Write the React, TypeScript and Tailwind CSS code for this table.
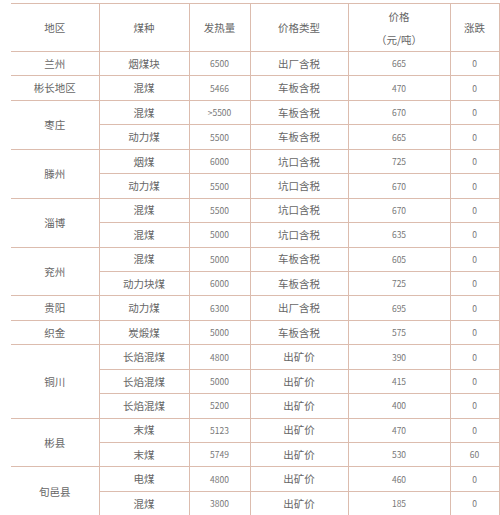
import React from "react";

type Row = { region?: string; span?: number; kind: string; heat: string; ptype: string; price: string; chg: string };

const rows: Row[] = [
  { region: "兰州", span: 1, kind: "烟煤块", heat: "6500", ptype: "出厂含税", price: "665", chg: "0" },
  { region: "彬长地区", span: 1, kind: "混煤", heat: "5466", ptype: "车板含税", price: "470", chg: "0" },
  { region: "枣庄", span: 2, kind: "混煤", heat: ">5500", ptype: "车板含税", price: "670", chg: "0" },
  { kind: "动力煤", heat: "5500", ptype: "车板含税", price: "665", chg: "0" },
  { region: "滕州", span: 2, kind: "烟煤", heat: "6000", ptype: "坑口含税", price: "725", chg: "0" },
  { kind: "动力煤", heat: "5500", ptype: "坑口含税", price: "670", chg: "0" },
  { region: "淄博", span: 2, kind: "混煤", heat: "5500", ptype: "坑口含税", price: "670", chg: "0" },
  { kind: "混煤", heat: "5000", ptype: "坑口含税", price: "635", chg: "0" },
  { region: "兖州", span: 2, kind: "混煤", heat: "5000", ptype: "车板含税", price: "605", chg: "0" },
  { kind: "动力块煤", heat: "6000", ptype: "车板含税", price: "725", chg: "0" },
  { region: "贵阳", span: 1, kind: "动力煤", heat: "6300", ptype: "出厂含税", price: "695", chg: "0" },
  { region: "织金", span: 1, kind: "炭煅煤", heat: "5000", ptype: "车板含税", price: "575", chg: "0" },
  { region: "铜川", span: 3, kind: "长焰混煤", heat: "4800", ptype: "出矿价", price: "390", chg: "0" },
  { kind: "长焰混煤", heat: "5000", ptype: "出矿价", price: "415", chg: "0" },
  { kind: "长焰混煤", heat: "5200", ptype: "出矿价", price: "400", chg: "0" },
  { region: "彬县", span: 2, kind: "末煤", heat: "5123", ptype: "出矿价", price: "470", chg: "0" },
  { kind: "末煤", heat: "5749", ptype: "出矿价", price: "530", chg: "60" },
  { region: "旬邑县", span: 2, kind: "电煤", heat: "4800", ptype: "出矿价", price: "460", chg: "0" },
  { kind: "混煤", heat: "3800", ptype: "出矿价", price: "185", chg: "0" },
];

const cjk = "border border-[#dcbcae] text-center align-middle text-[10.5px] text-[#666]";
const num = "border border-[#dcbcae] text-center align-middle text-[8.5px] text-[#777]";

export default function App() {
  return (
    <div className="w-[500px] h-[515px] overflow-hidden bg-white pt-[3px] pl-[11px]" style={{ fontFamily: '"Noto Sans CJK SC", "Noto Sans", sans-serif' }}>
      <table className="table-fixed border-collapse w-[488px]">
        <colgroup>
          <col className="w-[88px]" />
          <col className="w-[90px]" />
          <col className="w-[61px]" />
          <col className="w-[98px]" />
          <col className="w-[102px]" />
          <col className="w-[49px]" />
        </colgroup>
        <thead>
          <tr className="h-[48px]">
            <td className={cjk + " border-l-0"}>地区</td>
            <td className={cjk}>煤种</td>
            <td className={cjk}>发热量</td>
            <td className={cjk}>价格类型</td>
            <td className={cjk + " leading-[23px]"}>
              <div>价格</div>
              <div>（元/吨）</div>
            </td>
            <td className={cjk}>涨跌</td>
          </tr>
        </thead>
        <tbody>
          {rows.map((r, i) => (
            <tr key={i} className="h-[24.45px]">
              {r.region && (
                <td rowSpan={r.span} className={cjk + " border-l-0"}>
                  {r.region}
                </td>
              )}
              <td className={cjk}>{r.kind}</td>
              <td className={num}>{r.heat}</td>
              <td className={cjk}>{r.ptype}</td>
              <td className={num}>{r.price}</td>
              <td className={num}>{r.chg}</td>
            </tr>
          ))}
        </tbody>
      </table>
    </div>
  );
}
